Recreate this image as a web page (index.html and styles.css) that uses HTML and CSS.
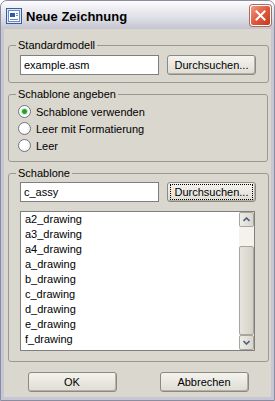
FILE: index.html
```html
<!DOCTYPE html>
<html lang="de">
<head>
    <meta charset="UTF-8">
    <title>Neue Zeichnung</title>
    <link rel="stylesheet" href="styles.css">
</head>
<body>
    <div class="window">
        <div class="titlebar">
            <svg class="app-icon" width="16" height="16" viewBox="0 0 16 16">
                <rect x="0.5" y="0.5" width="15" height="15" fill="#dfe8f6" stroke="#3a5f9e"/>
                <rect x="2.5" y="2.5" width="11" height="11" fill="#ffffff" stroke="#6d8cc4"/>
                <rect x="4" y="5" width="5" height="4" fill="#2f5aa8"/>
                <rect x="10" y="5" width="2" height="1" fill="#6d8cc4"/>
                <rect x="10" y="7" width="2" height="1" fill="#6d8cc4"/>
                <rect x="4" y="11" width="8" height="1" fill="#6d8cc4"/>
            </svg>
            <div class="title">Neue Zeichnung</div>
            <div class="close-btn">
                <svg width="11" height="11" viewBox="0 0 11 11">
                    <path d="M1.5 1.5 L9.5 9.5 M9.5 1.5 L1.5 9.5" stroke="#ffffff" stroke-width="2" stroke-linecap="square"/>
                </svg>
            </div>
        </div>

        <div class="client">
            <fieldset class="group group-model">
                <legend>Standardmodell</legend>
                <div class="row">
                    <input class="field" type="text" value="example.asm">
                    <button class="btn">Durchsuchen...</button>
                </div>
            </fieldset>

            <fieldset class="group group-mode">
                <legend>Schablone angeben</legend>
                <label class="radio"><input type="radio" name="mode" checked><span>Schablone verwenden</span></label>
                <label class="radio"><input type="radio" name="mode"><span>Leer mit Formatierung</span></label>
                <label class="radio"><input type="radio" name="mode"><span>Leer</span></label>
            </fieldset>

            <fieldset class="group group-template">
                <legend>Schablone</legend>
                <div class="row">
                    <input class="field" type="text" value="c_assy">
                    <button class="btn focused"><span class="focus-ring">Durchsuchen...</span></button>
                </div>
                <div class="listbox">
                    <div class="items">
                        <div>a2_drawing</div>
                        <div>a3_drawing</div>
                        <div>a4_drawing</div>
                        <div>a_drawing</div>
                        <div>b_drawing</div>
                        <div>c_drawing</div>
                        <div>d_drawing</div>
                        <div>e_drawing</div>
                        <div>f_drawing</div>
                    </div>
                    <div class="scrollbar">
                        <div class="sb-btn">
                            <svg width="7" height="5" viewBox="0 0 7 5"><path d="M0.5 4 L3.5 1 L6.5 4" fill="none" stroke="#4d6185" stroke-width="1.6"/></svg>
                        </div>
                        <div class="sb-track"></div>
                        <div class="sb-thumb"></div>
                        <div class="sb-btn">
                            <svg width="7" height="5" viewBox="0 0 7 5"><path d="M0.5 1 L3.5 4 L6.5 1" fill="none" stroke="#4d6185" stroke-width="1.6"/></svg>
                        </div>
                    </div>
                </div>
            </fieldset>

            <div class="actions">
                <button class="btn btn-wide">OK</button>
                <button class="btn btn-wide">Abbrechen</button>
            </div>
        </div>
    </div>
</body>
</html>
```

FILE: styles.css
```css
body {
    margin: 0;
    background: #ffffff;
    font-family: "Liberation Sans", Arial, sans-serif;
    font-size: 11px;
    color: #000;
}
.window {
    width: 275px;
    height: 401px;
    box-sizing: border-box;
    display: flex;
    flex-direction: column;
    border: 1px solid #8c8ca0;
    border-radius: 7px 7px 0 0;
    background: #c6c6d4;
}
.titlebar {
    height: 28px;
    display: flex;
    align-items: center;
    padding: 0 3px 0 5px;
    border-radius: 6px 6px 0 0;
    background: linear-gradient(#fdfdfe 0%, #ececf1 30%, #dcdce4 65%, #c4c4d0 100%);
}
.app-icon {
    margin-top: 1px;
}
.title {
    flex: 1;
    margin-left: 4px;
    font-size: 13px;
    font-weight: bold;
    padding-top: 2px;
}
.close-btn {
    width: 19px;
    height: 19px;
    margin-top: 1px;
    display: flex;
    align-items: center;
    justify-content: center;
    border: 1px solid #ffffff;
    border-radius: 3px;
    background: linear-gradient(135deg, #f09a84 0%, #de5a3e 50%, #c23a1e 100%);
    box-shadow: 0 0 0 1px #b06a5a;
}
.client {
    flex: 1;
    margin: 0 3px 3px 3px;
    padding: 10px 3px 0 4px;
    background: #dad7ce;
}
.group {
    margin: 0;
    padding: 3px 12px 7px 11px;
    border: 1px solid #9c9a90;
    border-radius: 3px;
}
.group legend {
    margin-left: -4px;
    padding: 0 2px;
    line-height: 13px;
}
.group-mode {
    margin-top: 5px;
    padding-top: 2px;
}
.group-template {
    margin-top: 5px;
    padding-top: 2px;
    padding-bottom: 10px;
}
.row {
    display: flex;
    gap: 8px;
}
.field {
    width: 139px;
    height: 20px;
    box-sizing: border-box;
    margin: 0;
    padding: 0 3px;
    border: 1px solid #7f7f7f;
    background: #fff;
    font: 11px "Liberation Sans", Arial, sans-serif;
}
.btn {
    width: 89px;
    height: 20px;
    box-sizing: border-box;
    margin: 0;
    padding: 0;
    border: 1px solid #8c8a80;
    border-radius: 3px;
    background: linear-gradient(#f4f3ee, #dedcd3);
    box-shadow: inset -1px -1px 0 #b4b1a6;
    font: 11px "Liberation Sans", Arial, sans-serif;
    color: #000;
}
.focus-ring {
    display: block;
    margin: 1px 2px;
    line-height: 14px;
    border: 1px dotted #000;
}
.radio {
    display: flex;
    align-items: center;
    height: 17px;
    margin-left: -2px;
}
.radio input {
    appearance: none;
    width: 13px;
    height: 13px;
    margin: 0 5px 0 0;
    border: 1px solid #6e7a86;
    border-radius: 50%;
    background: radial-gradient(circle at 40% 40%, #ffffff 40%, #e4e2da 100%);
    box-sizing: border-box;
}
.radio input:checked {
    background: radial-gradient(circle, #1c9a1c 0, #2aa82a 2px, #c6e8c6 3px, #ffffff 4px, #f2f1ec 100%);
}
.listbox {
    margin-top: 9px;
    height: 140px;
    width: 235px;
    box-sizing: border-box;
    display: flex;
    border: 1px solid #7f7f7f;
    background: #fff;
}
.items {
    flex: 1;
    padding-left: 4px;
    line-height: 15px;
}
.scrollbar {
    width: 15px;
    display: flex;
    flex-direction: column;
    background: #f4f2ea;
}
.sb-btn {
    height: 15px;
    box-sizing: border-box;
    display: flex;
    align-items: center;
    justify-content: center;
    border: 1px solid #a8a69c;
    border-radius: 2px;
    background: linear-gradient(90deg, #eeede6, #d8d6cc);
}
.sb-track {
    height: 19px;
}
.sb-thumb {
    flex: 1;
    box-sizing: border-box;
    border: 1px solid #a8a69c;
    border-radius: 2px;
    background: linear-gradient(90deg, #e6e4dc, #d4d2c8);
}
.actions {
    margin-top: 10px;
    display: flex;
    justify-content: center;
    gap: 43px;
}
```
